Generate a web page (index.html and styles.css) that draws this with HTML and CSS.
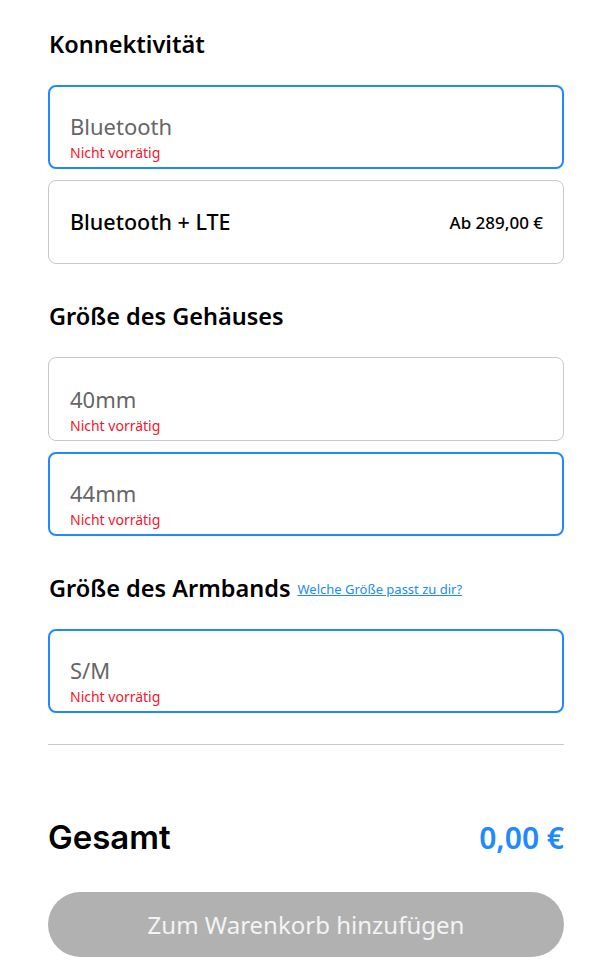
FILE: index.html
```html
<!DOCTYPE html>
<html lang="de">
<head>
    <meta charset="UTF-8">
    <meta name="viewport" content="width=device-width, initial-scale=1.0">
    <title>Konfiguration</title>
    <link rel="stylesheet" href="styles.css">
</head>
<body>
    <div class="config">
        <!-- Konnektivität -->
        <div class="option-group">
            <h2 class="group-title">Konnektivität</h2>
            <div class="option-list">
                <div class="option selected soldout">
                    <span class="option-name">Bluetooth</span>
                    <span class="option-stock">Nicht vorrätig</span>
                </div>
                <div class="option">
                    <span class="option-name">Bluetooth + LTE</span>
                    <span class="option-price">Ab 289,00 €</span>
                </div>
            </div>
        </div>

        <!-- Gehäuse -->
        <div class="option-group">
            <h2 class="group-title">Größe des Gehäuses</h2>
            <div class="option-list">
                <div class="option soldout">
                    <span class="option-name">40mm</span>
                    <span class="option-stock">Nicht vorrätig</span>
                </div>
                <div class="option selected soldout">
                    <span class="option-name">44mm</span>
                    <span class="option-stock">Nicht vorrätig</span>
                </div>
            </div>
        </div>

        <!-- Armband -->
        <div class="option-group">
            <h2 class="group-title">Größe des Armbands <a href="#" class="size-link">Welche Größe passt zu dir?</a></h2>
            <div class="option-list">
                <div class="option selected soldout">
                    <span class="option-name">S/M</span>
                    <span class="option-stock">Nicht vorrätig</span>
                </div>
            </div>
        </div>

        <hr class="divider">

        <div class="total">
            <span class="total-label">Gesamt</span>
            <span class="total-price">0,00 €</span>
        </div>

        <button class="cart-btn" disabled>Zum Warenkorb hinzufügen</button>
    </div>
</body>
</html>
```

FILE: styles.css
```css
/* Grundlayout */
body {
    font-family: "Noto Sans", Arial, sans-serif;
    background: #fff;
    color: #000;
    margin: 0;
}

.config {
    width: 516px;
    padding: 29px 0 0 48px;
}

/* Optionsgruppen */
.group-title {
    font-size: 23.5px;
    font-weight: 600;
    line-height: 30px;
    height: 30px;
    margin: 0 0 26px 1px;
    display: flex;
    align-items: center;
    gap: 7px;
}

.option-group + .option-group {
    margin-top: 37px;
}

.size-link {
    font-size: 13px;
    font-weight: 400;
    color: #2189ff;
    margin-top: 1px;
}

.option-list {
    display: flex;
    flex-direction: column;
    gap: 11px;
}

.option {
    height: 84px;
    box-sizing: border-box;
    border: 1px solid #c8c8c8;
    border-radius: 8px;
    padding: 0 20px 0 21px;
    display: flex;
    align-items: center;
    justify-content: space-between;
}

.option.selected {
    border: 2px solid #2189ff;
    padding-left: 20px;
}

.option.soldout {
    flex-direction: column;
    align-items: flex-start;
    justify-content: flex-end;
    padding-bottom: 5px;
}

.option-name {
    font-size: 21.5px;
    font-weight: 500;
    line-height: 26px;
}

.soldout .option-name {
    color: #666;
    font-size: 22px;
    font-weight: 400;
}

.option-stock {
    font-size: 14px;
    line-height: 18px;
    margin-top: 5px;
    color: #f5142d;
}

.option-price {
    font-size: 17px;
    font-weight: 500;
}

/* Summe */
.divider {
    border: none;
    border-top: 1px solid #c8c8c8;
    margin: 31px 0 0;
}

.total {
    display: flex;
    justify-content: space-between;
    align-items: center;
    height: 40px;
    margin-top: 72px;
}

.total-label {
    font-family: Inter, sans-serif;
    font-size: 33px;
    font-weight: 600;
}

.total-price {
    font-size: 30px;
    font-weight: 600;
    color: #2189ff;
}

.cart-btn {
    display: block;
    width: 100%;
    height: 65px;
    margin-top: 35px;
    border: none;
    border-radius: 33px;
    background: #b1b1b1;
    color: #f4f4f4;
    font-family: "Noto Sans", Arial, sans-serif;
    font-size: 24px;
}
```
